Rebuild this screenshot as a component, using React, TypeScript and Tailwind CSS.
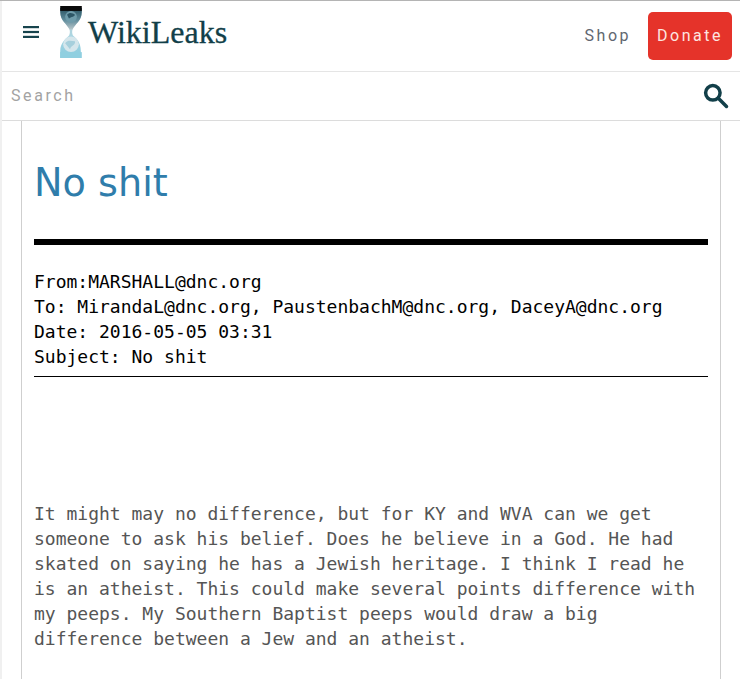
export default function App() {
  return (
    <div className="h-[679px] w-[740px] overflow-hidden bg-white pl-[2px] font-['DejaVu_Sans',sans-serif] shadow-[inset_2px_0_0_#f0f0f0]">
      <header className="-ml-[2px] border-t border-[#b4b4b4] bg-white pl-[2px] shadow-[inset_2px_0_0_#f0f0f0]">
        <div className="flex h-[71px] items-center border-b border-[#e5e5e5] pr-[8px]">
          <svg className="ml-[18px] -mt-[8px] h-[22px] w-[22px]" viewBox="0 0 22 22" fill="#17444d">
            <rect x="3" y="5" width="16" height="2.2" />
            <rect x="3" y="9.9" width="16" height="2.2" />
            <rect x="3" y="14.8" width="16" height="2.2" />
          </svg>
          <svg className="ml-[18px] -mt-[8px] h-[52px] w-[23px]" viewBox="0 0 23 53">
            <defs>
              <linearGradient id="top" x1="0" y1="0" x2="0" y2="1">
                <stop offset="0" stopColor="#26505f" />
                <stop offset="0.55" stopColor="#5f8b9b" />
                <stop offset="1" stopColor="#b8c6ca" />
              </linearGradient>
              <linearGradient id="bot" x1="0" y1="0" x2="0" y2="1">
                <stop offset="0" stopColor="#c5cfd1" />
                <stop offset="0.6" stopColor="#a9d6e3" />
                <stop offset="1" stopColor="#86cadd" />
              </linearGradient>
            </defs>
            <path d="M0 2H22V6C22 15 15 18 12.5 24C12 26 12 28 13 30C16 33 21 36 21 46V53H0V46C0 37 6 33 9 30C10 28 10 26 9.5 24C7 18 0 15 0 6Z" fill="url(#bot)" />
            <path d="M0 2H22V6C22 15 15 18 12.5 24H9.5C7 18 0 15 0 6Z" fill="url(#top)" />
            <rect x="0" y="0" width="22" height="5" fill="#0a0a0a" />
            <circle cx="11" cy="11" r="6" fill="#6f9cab" />
            <path d="M7 9C9 6 13 7 15 9C14 12 10 11 9 13Z" fill="#2d5666" />
            <circle cx="11" cy="39" r="8" fill="#d5e6ec" />
            <path d="M5 38C8 34 12 36 15 36C16 40 11 40 10 44Z" fill="#a6cfdc" />
            <rect x="0" y="47" width="22" height="6" fill="#8fcfe0" />
          </svg>
          <span className="ml-[5px] -mt-[9px] font-['Liberation_Serif',serif] text-[32px] leading-none text-[#123f49] [-webkit-text-stroke:0.3px_#123f49]">WikiLeaks</span>
          <span className="ml-auto font-['Roboto',sans-serif] text-[16px] tracking-[2.5px] text-[#5f6770]">Shop</span>
          <span className="ml-[17px] flex h-[48px] w-[84px] items-center justify-center rounded-[5px] bg-[#e5332a] font-['Roboto',sans-serif] text-[16px] tracking-[2.5px] text-[#fde5e0]">Donate</span>
        </div>
        <div className="flex h-[49px] items-center border-b border-[#dcdcdc] pl-[9px] pr-[10px]">
          <span className="font-['Roboto',sans-serif] text-[16px] tracking-[2.6px] text-[#a3a3a3]">Search</span>
          <svg className="ml-auto h-[28px] w-[28px]" viewBox="0 0 24 24" fill="none" stroke="#123f49" strokeWidth="3">
            <circle cx="9.3" cy="9.3" r="6.2" />
            <path d="M14 14L21 21" strokeLinecap="round" />
          </svg>
        </div>
      </header>
      <main className="ml-[19px] mr-[19px] h-[560px] border-x border-[#cfcfcf] bg-white px-[12px]">
        <h1 className="pt-[38px] text-[38.2px] leading-[48px] text-[#2f7dab]">No shit</h1>
        <div className="mt-[32px] h-[6px] bg-black" />
        <div className="mt-[24px] border-b border-black pb-[7px] font-['DejaVu_Sans_Mono',monospace] text-[18px] leading-[25px] text-black">
          <p>From:MARSHALL@dnc.org</p>
          <p>To: MirandaL@dnc.org, PaustenbachM@dnc.org, DaceyA@dnc.org</p>
          <p>Date: 2016-05-05 03:31</p>
          <p>Subject: No shit</p>
        </div>
        <div className="mt-[124px] font-['DejaVu_Sans_Mono',monospace] text-[18px] leading-[25px] text-[#555]">
          <p>It might may no difference, but for KY and WVA can we get</p>
          <p>someone to ask his belief. Does he believe in a God. He had</p>
          <p>skated on saying he has a Jewish heritage. I think I read he</p>
          <p>is an atheist. This could make several points difference with</p>
          <p>my peeps. My Southern Baptist peeps would draw a big</p>
          <p>difference between a Jew and an atheist.</p>
        </div>
      </main>
    </div>
  );
}
